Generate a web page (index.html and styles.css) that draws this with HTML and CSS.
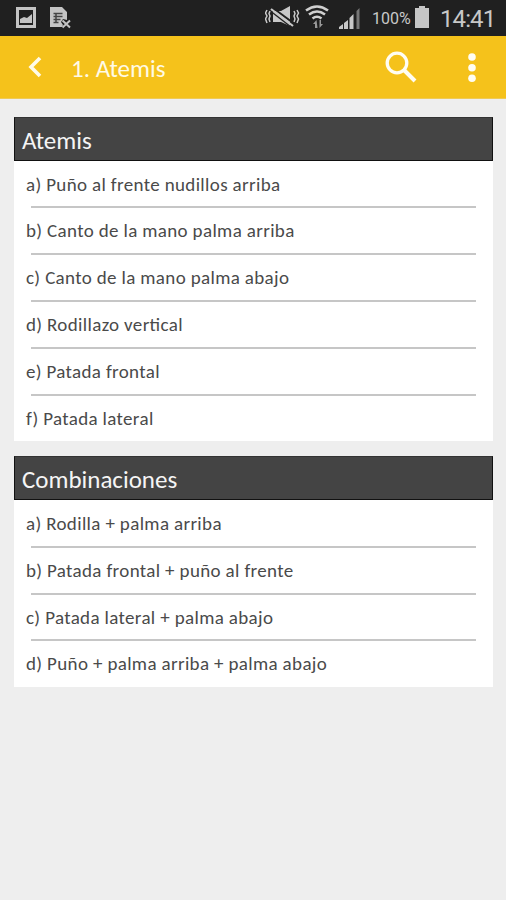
FILE: index.html
```html
<!DOCTYPE html>
<html lang="es">
<head>
<meta charset="utf-8">
<title>1. Atemis</title>
<link rel="stylesheet" href="styles.css">
</head>
<body>
<div class="status">
  <svg class="notes" width="56" height="24" viewBox="0 0 56 24">
    <path fill="#c4c4c4" fill-rule="evenodd" d="M0 1h20v21H0zM3 4v15h14V4z"/>
    <path fill="#c4c4c4" d="M4 17v-4l4-2 3 1 5-4v9z"/>
    <path fill="#c4c4c4" d="M34 1h12l5 5v8l-4-1-2 3 2 3-1 2H34z"/>
    <path stroke="#444" stroke-width="1.5" fill="none" d="M37.500 7.500h9M37.500 10.500h9M37.500 13.500h7M37.500 16.500h5M40 7v10"/>
    <path stroke="#c4c4c4" stroke-width="2" fill="none" d="M46.500 14.500l7.500 7M54 14.500l-7.500 7"/>
  </svg>
  <svg class="signals" width="98" height="26" viewBox="0 0 98 26">
    <g fill="none" stroke="#c8c8c8">
      <path stroke-width="1.500" d="M2 7l-1.500 3L2 13l-1.500 3L2 20M5 8l-1 2.500L5 13l-1 3 1 3M29 8l1 2.500-1 2.500 1 3-1 3M32 7l1.500 3-1.500 3 1.500 3-1.500 4"/>
    </g>
    <path fill="#c8c8c8" d="M8 8h8l9-5v20l-9-4H8z"/>
    <path stroke="#202020" stroke-width="2" d="M8 5l21 15.500"/>
    <path stroke="#c8c8c8" stroke-width="2.200" d="M6 6l22 17"/>
    <path stroke="#202020" stroke-width="1.300" d="M6 8.500l20 15.500"/>
    <g fill="none" stroke="#d0d0d0" stroke-width="2.600">
      <path d="M41 7.500q11-8 22 0M44 11.500q8-6 16 0M47.500 15.500q4.500-3.500 9 0"/>
    </g>
    <path fill="#999" d="M51.500 17L48 21h2v4h2.500zM54.500 25l3.500-4h-2v-4h-1.500z"/>
    <path fill="#c8c8c8" d="M74 26v-2l4-3v5zM79 26v-6l4-3v9zM84.500 26V15l4-4v15z"/>
    <path fill="#777" d="M91.500 26V8l3-3v21z"/>
  </svg>
  <span class="percent">100%</span>
  <svg class="battery" width="16" height="23" viewBox="0 0 16 23"><path fill="#c6c6c6" d="M5 0h6v2h4v20H1V2h4z"/></svg>
  <span class="clock">14:41</span>
</div>
<header class="bar">
  <svg class="back" width="14" height="22" viewBox="0 0 14 22"><path d="M12 2L3 11l9 9" fill="none" stroke="#fffbe8" stroke-width="3.600"/></svg>
  <h1>1. Atemis</h1>
  <svg class="search" width="32" height="32" viewBox="0 0 32 32"><g fill="none" stroke="#fffdf2"><circle cx="12" cy="12" r="9.800" stroke-width="3.300"/><path d="M19 19l11 11" stroke-width="4"/></g></svg>
  <svg class="more" width="8" height="30" viewBox="0 0 8 30"><g fill="#fffdf2"><circle cx="4" cy="4" r="3.800"/><circle cx="4" cy="14.700" r="3.800"/><circle cx="4" cy="25.300" r="3.800"/></g></svg>
</header>
<main>
  <section>
    <h2>Atemis</h2>
    <ul>
      <li>a) Puño al frente nudillos arriba</li>
      <li>b) Canto de la mano palma arriba</li>
      <li>c) Canto de la mano palma abajo</li>
      <li>d) Rodillazo vertical</li>
      <li>e) Patada frontal</li>
      <li>f) Patada lateral</li>
    </ul>
  </section>
  <section>
    <h2>Combinaciones</h2>
    <ul>
      <li>a) Rodilla + palma arriba</li>
      <li>b) Patada frontal + puño al frente</li>
      <li>c) Patada lateral + palma abajo</li>
      <li>d) Puño + palma arriba + palma abajo</li>
    </ul>
  </section>
</main>
</body>
</html>
```
FILE: styles.css
```css
* { box-sizing: border-box; margin: 0; padding: 0; }
body { background: #eee; font-family: Carlito, Lato, sans-serif; min-height: 900px; }
svg { display: block; flex: none; }
.status { height: 36px; background: #202020; display: flex; align-items: flex-start; color: #c8c8c8; font-family: Roboto, sans-serif; white-space: nowrap; }
.notes { margin: 6px 0 0 16px; }
.signals { margin: 3px 0 0 193px; }
.percent { margin: 9px 0 0 9px; width: 39px; font-size: 16px; line-height: 20px; }
.battery { margin: 6px 0 0 3px; }
.clock { margin: 5px 0 0 10px; font-size: 24px; line-height: 28px; letter-spacing: -.9px; }
.bar { height: 63px; background: #f5c21b; border-bottom: 1px solid #efca55; display: flex; align-items: flex-start; color: #fffae6; }
.back { margin: 20px 0 0 28px; }
h1 { margin: 17px 0 0 29px; width: 314px; font-size: 25px; line-height: 32px; font-weight: 400; }
.search { margin: 15px 0 0 0; }
.more { margin: 17px 0 0 51px; }
main { padding: 18px 13.500px 0 14.400px; display: flex; flex-direction: column; gap: 15px; }
section { background: #fff; }
h2 { height: 43.500px; background: #444; border: 1px solid #111; border-top-color: #333; color: #f5f5f5; font-size: 25px; line-height: 45px; font-weight: 400; padding-left: 6.500px; }
ul { list-style: none; }
li { height: 46.840px; line-height: 48px; font-size: 19px; color: #4a4a4a; padding-left: 11.600px; letter-spacing: .35px; font-feature-settings: "liga" 1; }
li:not(:last-child)::after { content: ""; display: block; height: 2px; margin: -2.200px 17px 0 17px; margin-left: 5px; background: #c6c6c6; }
```
